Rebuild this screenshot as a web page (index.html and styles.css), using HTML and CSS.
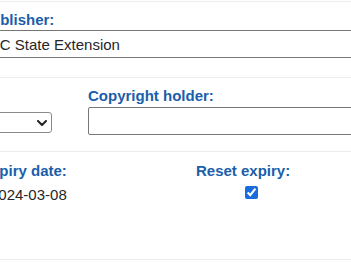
FILE: index.html
```html
<!DOCTYPE html>
<html>
<head>
<meta charset="utf-8">
<link rel="stylesheet" href="styles.css">
</head>
<body>
<div class="form">
  <div class="sec sec-first">
    <div class="field">
      <label class="lbl lbl-pub">Publisher:</label>
      <input class="txt" type="text" value="NC State Extension">
    </div>
  </div>
  <div class="sec sec-two">
    <div class="row">
      <div class="col-select">
        <div class="select-wrap">
          <select class="sel"><option></option></select>
          <svg class="chev" width="10" height="6" viewBox="0 0 10 6"><path d="M1 1 L5 5 L9 1" fill="none" stroke="#222" stroke-width="2" stroke-linecap="round" stroke-linejoin="round"/></svg>
        </div>
      </div>
      <div class="col-copy">
        <label class="lbl lbl-copy">Copyright holder:</label>
        <input class="txt" type="text" value="">
      </div>
    </div>
  </div>
  <div class="sec sec-three">
    <div class="row row-top">
      <div class="col-expiry">
        <label class="lbl">Expiry date:</label>
        <div class="val">2024-03-08</div>
      </div>
      <div class="col-reset">
        <label class="lbl">Reset expiry:</label>
        <input class="chk" type="checkbox" checked>
      </div>
    </div>
  </div>
</div>
</body>
</html>
```

FILE: styles.css
```css
html, body {
  margin: 0;
  padding: 0;
  background: #fff;
  overflow: hidden;
}
body {
  width: 351px;
  height: 262px;
  font-family: "Liberation Sans", Arial, sans-serif;
  font-size: 15px;
  color: #262626;
}
.form {
  margin-left: -19px;
  width: 440px;
  padding-top: 1px;
}
.sec {
  border-top: 1px solid #ececec;
}
.sec-first {
  padding: 9px 0 19px;
}
.sec-two {
  padding: 9px 0 16px;
}
.sec-three {
  padding: 10px 0 0;
  height: 97px;
  border-bottom: 1px solid #ececec;
}
.lbl {
  display: block;
  font-weight: bold;
  font-size: 15px;
  line-height: 18px;
  color: #1b5eaa;
}
.lbl-pub {
  margin-bottom: 1px;
}
.lbl-copy {
  margin-bottom: 2px;
}
.txt {
  display: block;
  box-sizing: border-box;
  width: 100%;
  height: 28px;
  margin: 0;
  padding: 0 7px;
  border: 1px solid #767676;
  border-radius: 2px;
  font-family: "Liberation Sans", Arial, sans-serif;
  font-size: 15px;
  color: #262626;
  background: #fff;
  outline: none;
}
.row {
  display: flex;
  align-items: flex-end;
}
.row-top {
  align-items: flex-start;
}
.col-select {
  width: 71px;
  flex: none;
  margin-right: 36px;
  padding-bottom: 2px;
}
.col-copy {
  flex: 1;
}
.select-wrap {
  position: relative;
}
.sel {
  display: block;
  box-sizing: border-box;
  width: 71px;
  height: 21px;
  margin: 0;
  -webkit-appearance: none;
  appearance: none;
  border: 1px solid #8a8a8a;
  border-radius: 3px;
  background: #fff;
  font-family: "Liberation Sans", Arial, sans-serif;
  font-size: 13px;
}
.chev {
  position: absolute;
  left: 56px;
  top: 8px;
  width: 10px;
  height: 6px;
}
.col-expiry {
  width: 215px;
  flex: none;
}
.val {
  margin-top: 6px;
  padding-left: 9px;
  line-height: 18px;
  color: #262626;
}
.col-reset {
  flex: 1;
}
.chk {
  display: block;
  width: 13px;
  height: 13px;
  margin: 6px 0 0 49px;
  accent-color: #1a6be0;
}
```
